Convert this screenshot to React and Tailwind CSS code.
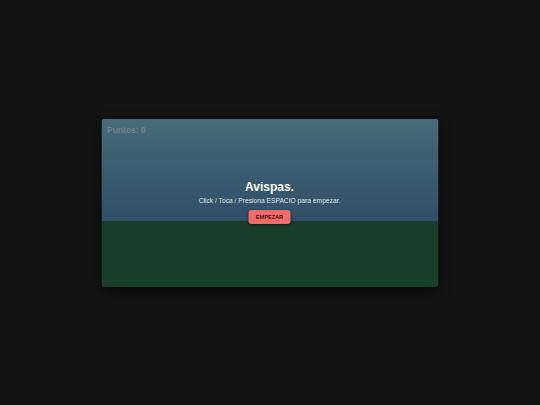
import React from 'react';

export default function App() {
  return (
    <div className="w-full h-[405px] bg-[#131313] flex items-center justify-center font-['Liberation_Sans',Arial,sans-serif]">
      <div className="relative w-[337px] h-[168px] -translate-x-[0.5px] rounded-[3px] overflow-hidden shadow-[0_4px_12px_rgba(0,0,0,0.6)] flex flex-col">
        <div className="h-[102px] bg-gradient-to-b from-[#476b78] to-[#2f4f68]" />
        <div className="flex-1 bg-[#173f2a]" />

        {/* score */}
        <div className="absolute left-[6px] top-[5px] text-[8.5px] font-bold text-[#6f818a]">Puntos: 0</div>

        {/* start overlay */}
        <div className="absolute inset-0 flex flex-col items-center justify-center">
          <h1 className="text-[12px] font-bold text-white leading-none">Avispas.</h1>
          <p className="mt-[5px] text-[6.7px] text-[#dfe6ea] leading-none">Click / Toca / Presiona ESPACIO para empezar.</p>
          <button className="mt-[6px] w-[42px] h-[14px] rounded-[3px] bg-[#f26b6b] text-[5.6px] font-bold text-[#3a1010] shadow-[0_1px_3px_rgba(0,0,0,0.5)]">
            EMPEZAR
          </button>
        </div>
      </div>
    </div>
  );
}
